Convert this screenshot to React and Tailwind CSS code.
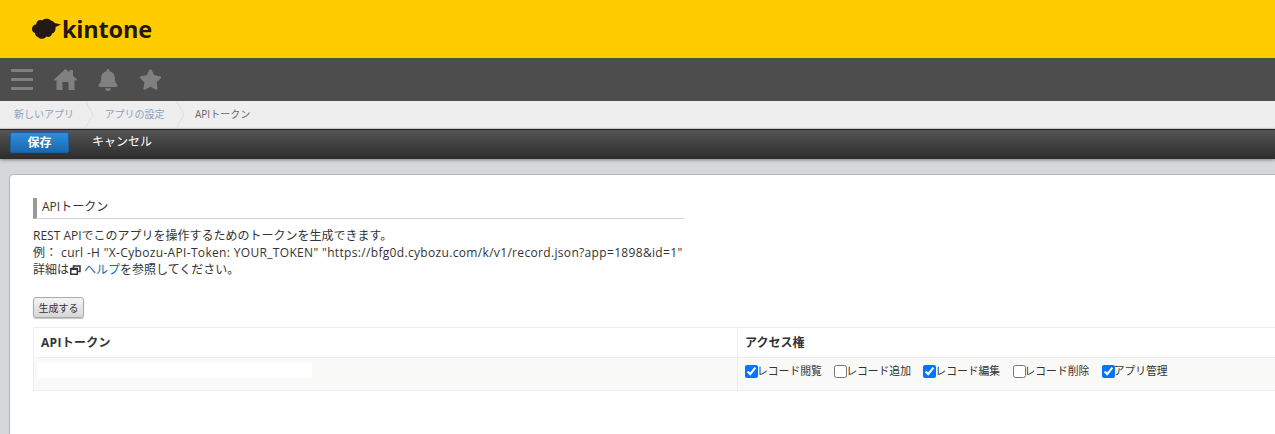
import { FaBell, FaStar } from "react-icons/fa";

const crumbs = ["新しいアプリ", "アプリの設定"];

const permissions = [
  { label: "レコード閲覧", checked: true },
  { label: "レコード追加", checked: false },
  { label: "レコード編集", checked: true },
  { label: "レコード削除", checked: false },
  { label: "アプリ管理", checked: true },
];

function Chevron() {
  return (
    <svg width="9" height="27" viewBox="0 0 9 27" className="mr-[10.5px] ml-[11px] shrink-0 text-[#dedede]">
      <path d="M.5 0l7.500 13.500L.5 27" fill="none" stroke="currentColor" />
    </svg>
  );
}

function Logo() {
  return (
    <div className="flex items-center gap-[1px] pl-[32px] pt-[15px]">
      <svg width="29" height="22" viewBox="0 0 29 22" className="text-[#231815]">
        <path
          fill="currentColor"
          d="M0 11c0-3 2-4.500 4-4.500C4.500 3 7 1 10 2.500 12.500 0 17 0 19 2.500c2 .5 3 1.500 3.500 2.500L29 6.500l-5.500 2.500c.5 3-1 6-3.500 6.500-.5 3-3.500 4-5.500 3-2.500 3-7 3-8.500 .5-2-.5-3-2-3-4C1 14.500 0 13 0 11z"
        />
      </svg>
      <span className="font-['Open_Sans',sans-serif] text-[23.5px] leading-[28px] font-bold tracking-[-0.2px] text-[#231815]">
        kintone
      </span>
    </div>
  );
}

export default function App() {
  return (
    <div className="h-[434px] w-[1275px] overflow-hidden bg-[#d5d7d9] font-['Open_Sans','Noto_Sans_CJK_JP',sans-serif] text-[12px] text-[#333]">
      <header className="h-[58px] bg-[#ffcc00]">
        <Logo />
      </header>

      {/* global nav */}
      <nav className="flex h-[43px] items-center bg-[#4d4d4d] text-[#808080]">
        <div className="ml-[11px] flex h-[21px] w-[22px] flex-col justify-between">
          <span className="h-[3px] bg-[#808080]" />
          <span className="h-[3px] bg-[#808080]" />
          <span className="h-[3px] bg-[#808080]" />
        </div>
        <svg width="23" height="21" viewBox="0 0 23 21" className="ml-[21px]">
          <path fill="currentColor" d="M11.500 0l4 3.500V1h3.500v5.700L23 10.500l-1 1.200-1.500-1V21h-6v-8h-6v8h-6V10.700L1 11.700 0 10.500z" />
        </svg>
        <FaBell className="ml-[20px] text-[22px]" />
        <FaStar className="ml-[20px] text-[23px]" />
      </nav>

      {/* breadcrumbs */}
      <div className="flex h-[27px] items-center bg-[#eeeeee] pl-[14px] text-[10px]">
        {crumbs.map((crumb) => (
          <div key={crumb} className="flex items-center">
            <span className="text-[#8f9fc4]">{crumb}</span>
            <Chevron />
          </div>
        ))}
        <span className="text-[#666]">APIトークン</span>
      </div>

      {/* toolbar */}
      <div className="mt-[1px] flex h-[30px] items-start border-t border-[#222] bg-gradient-to-b from-[#555] to-[#2c2c2c] pt-[2px] shadow-[0_1px_3px_rgba(0,0,0,0.4)]">
        <button className="ml-[10px] h-[21px] w-[59px] rounded-[2px] border border-[#1d5fa3] bg-gradient-to-b from-[#2f8fd8] to-[#1c68ad] text-[12px] leading-[17px] font-bold text-white">
          保存
        </button>
        <span className="ml-[23px] text-[12px] leading-[19px] text-white">キャンセル</span>
      </div>

      {/* main card */}
      <main className="mt-[15px] ml-[9px] h-[300px] w-[1300px] rounded-tl-[4px] border border-[#b5b5b5] bg-white pt-[23px] pl-[23px]">
        <h2 className="h-[21px] w-[651px] border-b border-[#d6d4d0] border-l-[4px] border-l-[#999] pl-[5px] text-[12px] leading-[17px]">
          APIトークン
        </h2>

        <div className="mt-[8px] text-[12px] leading-[17px]">
          <p>REST APIでこのアプリを操作するためのトークンを生成できます。</p>
          <p className="tracking-[0.33px]">
            例： curl -H "X-Cybozu-API-Token: YOUR_TOKEN" "https://bfg0d.cybozu.com/k/v1/record.json?app=1898&amp;id=1"
          </p>
          <p className="flex items-center">
            詳細は
            <svg width="11" height="10" viewBox="0 0 11 10" className="mr-[3px] ml-[1px]">
              <path fill="none" stroke="#333" strokeWidth="1.500" d="M3.500 3V1h6.500v5.500H7.500M.800 3.500h6.500v5.700H.800z" />
              <path fill="#333" d="M.800 3h6.500v2H.800z" />
            </svg>
            <span className="text-[#1b6ca8]">ヘルプ</span>を参照してください。
          </p>
        </div>

        <button className="mt-[19px] block h-[21px] w-[51px] rounded-[3px] border border-[#aaa] bg-gradient-to-b from-[#f4f4f4] to-[#d6d6d6] text-[10px] leading-[18px] shadow-[0_1px_1px_rgba(0,0,0,0.25)]">
          生成する
        </button>

        <table className="mt-[9px] w-[1300px] table-fixed border-collapse border border-[#eeeeee]">
          <thead>
            <tr className="h-[30px] text-left">
              <th className="w-[704px] border-r border-[#eeeeee] pl-[7px] text-[12px] font-bold tracking-[0.3px]">
                APIトークン
              </th>
              <th className="pl-[7px] text-[12px] font-bold">アクセス権</th>
            </tr>
          </thead>
          <tbody>
            <tr className="h-[33px] border-t border-[#eeeeee] bg-[#f9f9f7]">
              <td className="border-r border-[#eeeeee] pb-[8px] pl-[4px]">
                <div className="h-[15px] w-[274px] bg-white" />
              </td>
              <td className="pb-[6px] pl-[7px]">
                <div className="flex items-center">
                  {permissions.map((item) => (
                    <label key={item.label} className="mr-[12.4px] flex items-center text-[10.8px]">
                      <input type="checkbox" defaultChecked={item.checked} className="m-0 h-[13px] w-[13px]" />
                      <span className="-ml-[1px]">{item.label}</span>
                    </label>
                  ))}
                </div>
              </td>
            </tr>
          </tbody>
        </table>
      </main>
    </div>
  );
}
